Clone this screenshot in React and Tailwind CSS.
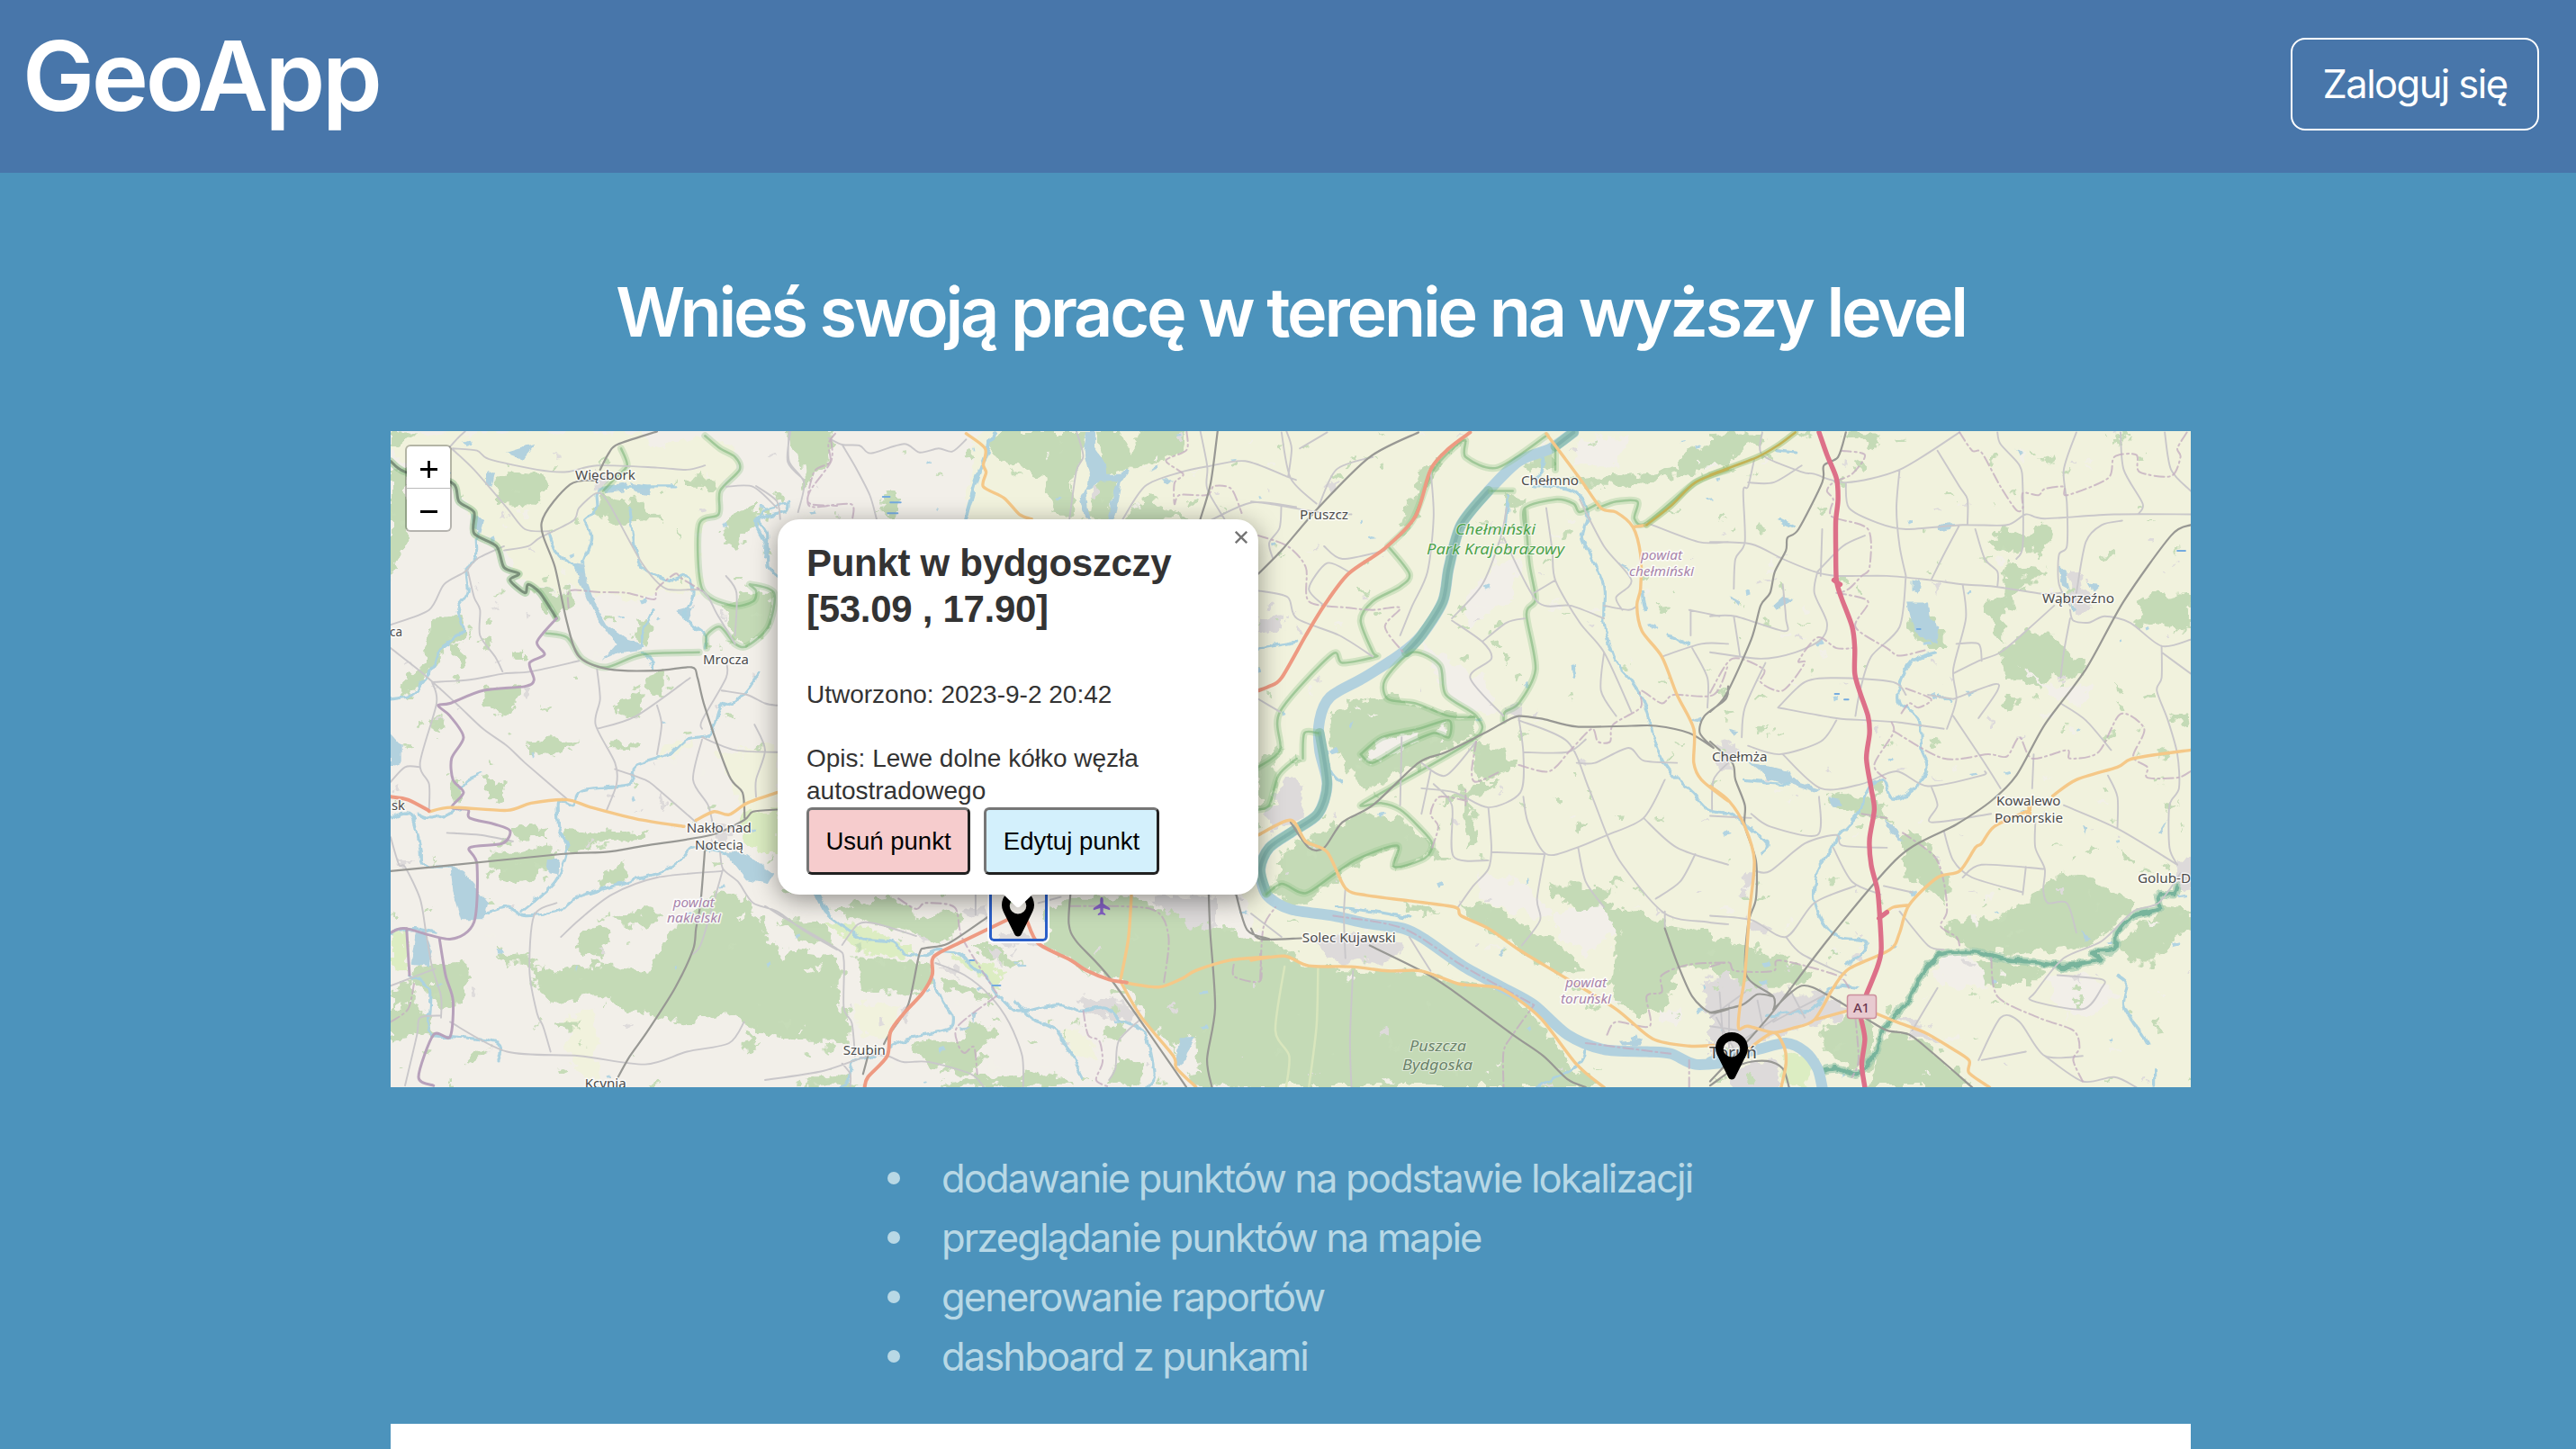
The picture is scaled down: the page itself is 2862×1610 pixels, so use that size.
import React from "react";

/* Map geometry, in overlapping sheets. Each sheet maps its own grid to canvas units. */
const SHEETS = [
  {
    at: [430, 470, 1 / 3, 0.47194],
    shapes: {
      E: "150,20 860,20 900,60 1040,30 1160,60 1180,110 1110,160 1100,220 1040,240 1050,400 900,400 850,420 620,395 530,390 450,370 380,300 290,240 280,200 220,140 60,100 12,60 12,20|600,1400 700,1380 700,1560 610,1500|1100,780 1300,750 1300,950 1190,930 1150,850|940,750 1040,745 960,780 900,790",
      F: "12,115 60,115 70,270 12,370|400,110 520,120 540,150 500,195 360,190 360,160|700,170 860,190 915,230 760,235 690,210|470,380 520,390 600,400 620,430 560,465 510,410|170,460 250,450 265,490 180,540 120,610 60,650 40,630 110,580|210,520 250,515 260,580 235,580|305,505 365,515 320,535|410,530 465,540 465,565 420,560|320,630 435,620 440,660 380,690 330,665|140,690 185,690 180,730 145,720|1150,220 1230,190 1230,240 1170,290 1120,270|990,130 1100,135 1095,155 990,150|1200,400 1290,400 1270,480 1200,530 1150,500 1120,430|1340,20 1480,20 1470,90 1400,140 1390,90 1340,60|870,600 910,590 915,650 880,640|750,670 850,625 840,690 770,690|740,755 835,755 830,768 745,765|460,745 560,740 640,750 540,790 470,775|320,830 390,850 395,890 340,880|420,960 540,950 540,975 430,980|590,950 700,960 880,965 850,985 720,990 640,1010 590,1000|340,1010 450,1010 550,990 555,1030 480,1070 400,1080 340,1050|690,1070 790,1040 800,1080 700,1090|100,1280 260,1270 270,1300 250,1370 180,1370 80,1310|12,1345 90,1310 80,1370 140,1400 150,1440 12,1455|360,1230 480,1270 560,1290 700,1270 870,1290 940,1200 1080,1110 1200,1115 1260,1200 1350,1280 1500,1290 1500,1430 1340,1450 1230,1430 1140,1390 1000,1410 880,1400 760,1370 690,1350 560,1370 500,1330 480,1280 400,1270|620,1220 700,1185 740,1200 720,1260 650,1250|750,1170 850,1145 920,1160 850,1190|560,1410 645,1410 640,1425 570,1425|280,1480 340,1465 300,1505 260,1500|1190,1430 1250,1460 1200,1480|12,20 100,20 60,50 12,60|820,480 880,460 880,520 830,520|210,850 240,830 260,870 230,900",
      G: "1190,920 1300,910 1300,1020 1220,1000 1170,960|12,1200 65,1190 70,1300 12,1280",
      U: "920,880 940,895 920,905 905,895|450,630 485,630 460,650|1080,940 1160,960 1140,990 1090,980|30,1030 90,1030 60,1050|690,110 740,130 700,165",
      W: "210,1040 260,1060 340,1130 325,1170 250,1170 220,1100|95,1200 130,1200 150,1240 140,1280 80,1275|1130,1010 1200,1015 1290,1060 1270,1085 1200,1075|620,330 655,335 665,370 690,420 740,480 800,510 850,520 840,535 780,540 720,560 765,520 710,470 665,415 645,375|810,140 880,150 870,170 830,165|540,1030 575,1030 565,1065 535,1060|280,210 320,230 310,260 285,250|970,440 1020,430 1000,470|12,730 50,760 50,800 12,810|395,70 490,50 450,85|330,110 360,120 350,150 330,145|720,150 800,140 790,160 730,165",
    },
    lines: {
      w: "300,260 300,320 265,340 270,400 235,440 255,490 180,530 140,590 80,640 12,650|540,260 570,310 650,350|660,230 680,270 650,330|810,200 840,330 940,370 1000,360 1020,400 995,460 1060,500 1060,530|1240,590 1170,650 1110,670 1080,730 1000,745 940,780 820,810 810,850 650,865 620,900 570,890 575,960 600,1000 560,1080 450,1150|12,930 80,920 110,1000 120,1040 210,1045|330,1155 400,1140 460,1160 570,1150 640,1115 900,1060 980,1030 1020,1000 1130,1010|1335,185 1325,210 1230,230 1265,290 1270,340 1300,360|12,1200 90,1190 160,1200|75,1300 140,1330 140,1400 150,1440 230,1445 370,1460 372,1500|100,920 150,930 260,905|850,540 885,560 890,580|960,150 720,155 700,200 660,230|1430,1110 1460,1150 1500,1175|850,520 860,480 885,440|245,860 270,840 315,825",
      K: "12,90 60,115 215,140 240,185 290,210 290,260 365,290 390,340 440,355 410,370 460,400 470,380 510,400 565,460",
      B: "565,460 500,515 525,545 475,565 490,605 460,620 320,630 210,660 170,665 210,690 255,740 215,790 220,840 255,870 215,905 270,910 275,930 360,945 410,960 385,990 275,1000 300,1040 290,1175 210,1215 60,1190 12,1200|175,1215 195,1300 220,1360 210,1445 155,1440 105,1540 155,1560|65,1190 75,1300",
      t: "900,20 770,50 740,70 710,110|700,135 610,145 515,235 560,340 600,470 640,550 740,580 900,583 1015,575 1035,600 1060,670 1140,830 1185,870 1192,930|12,1055 160,1045 580,1015 730,1010 860,995 1080,970 1190,935 1220,915 1300,910|1060,1000 1045,1130 1030,1190 1020,1240 960,1330 870,1430 810,1490 770,1540",
      P: "1060,30 1110,60 1160,80 1175,110 1110,160 1105,215 1040,240 1050,390 1150,430 1220,420 1230,395 1210,380 1290,400 1270,480 1200,525 1160,520 1110,480 1065,500 1065,530|530,495 600,505 650,555 730,575 850,545 1040,540|780,60 800,100 760,130 720,160",
      m: "220,60 300,65 340,85 500,110 600,115 700,100 900,105 1000,110 1060,100|215,60 290,110 400,200 460,250 540,255|390,300 470,290 510,270 620,230 640,200 700,165 740,190 850,330 930,390 1050,395 1100,450 1160,520|12,475 140,440 190,380 260,350 300,320 390,290|270,350 290,410 310,440 310,500 360,550 385,585|150,610 270,605 390,590 480,585 640,560|12,530 120,590 230,660 320,720 400,760 460,800 600,885|150,610 165,660 110,800 140,850 140,910|700,580 710,650 695,710 760,800 765,850 730,915|700,720 830,690 1010,600|900,665 915,710 900,780|760,815 860,840 900,860 1030,940|1130,560 1130,600 1050,700 1050,720|1115,630 1200,640 1260,660 1300,665|1050,745 1020,840 1070,900 1090,960|1110,1010 1120,1050 1170,1080 1220,1130 1300,1150 1400,1200 1500,1240|1120,1050 1050,1220 1020,1250|12,845 60,810 110,810|12,975 40,1040 60,1045 110,1120 130,1200 150,1280 180,1350 180,1400|200,965 310,970 420,985|565,1130 490,1160 475,1290 500,1390 520,1420 545,1480|1115,1055 900,1070 750,1110 640,1170 580,1210|1160,500 1165,400 1130,360|1340,20 1340,90 1390,140 1370,210|210,1410 400,1480 640,1490 860,1510 1000,1480 1140,1460 1190,1410|60,1560 100,1440 110,1400 180,1395|1050,740 1160,770 1300,775|1130,150 1220,150 1300,200|1225,710 1260,770 1230,840 1230,880|130,120 230,40 260,20|12,1325 160,1285",
      o: "140,915 215,905 400,912 480,895 600,887 680,905 830,932 990,950|1030,935 1090,915 1140,922 1200,895 1300,870",
      r: "12,880 70,887 140,913",
      b: "605,435 610,395 700,398 800,400 890,415 900,390 960,355 980,365 1050,395|1480,40 1480,90 1410,160 1410,190 1500,195|12,1410 70,1380 90,1320",
    },
  },
  {
    at: [840, 470, 0.38265, 1 / 3],
    shapes: {
      F: "90,27 230,27 205,70 215,130 170,160 140,230 135,180 130,130 120,100 160,80 100,45|700,27 960,27 950,120 920,180 910,320 880,320 850,240 830,180 750,140 680,100|985,27 1060,27 1080,90 1100,110 1110,27 1250,27 1240,100 1180,130 1060,160 1010,170|1000,190 1060,170 1020,320 960,320 965,260|1060,320 1110,270 1140,250 1200,290 1260,320|370,230 420,240 410,310 380,310|50,240 80,245 80,275 55,265|20,280 45,300 40,330 25,325",
      W: "960,27 985,27 985,80 1010,120 1020,170 1060,170 1075,150 1085,160 1060,200 1040,320 1020,320 1050,190 1000,195 960,220 970,320 955,320 940,250 970,180 950,90|1140,165 1170,135 1165,155|1180,190 1210,190 1195,205",
      U: "985,210 1000,215 985,260 970,250",
    },
    lines: {
      w: "695,27 670,100 640,200 610,320|0,320 30,285 90,270|0,320 30,370 25,450|690,27 668,100 636,200 606,320",
      o: "610,35 665,85 660,140 668,165 660,212 720,250 765,305 800,320",
      m: "100,27 92,130 140,190|210,50 250,72 300,75 320,95 340,100 430,70 475,98 530,85 570,95 610,55|250,72 290,150 330,240 350,320|0,210 60,260 70,320|930,27 950,110 930,160 910,320|1065,320 1130,210 1230,165 1310,145 1420,127 1540,178 1568,190|1290,27 1310,145 1310,220 1360,320|1310,330 1440,265 1568,280|1540,27 1555,85 1545,180|1525,280 1520,350 1490,400 1500,450",
      t: "1340,27 1320,200 1290,320",
      b: "230,35 210,70 215,130 170,160 150,250 165,280 275,270 280,320|1250,27 1250,90 1190,125 1240,170 1215,200 1215,270 1230,240 1310,240 1330,210 1380,220 1410,300",
      d: "368,246 388,246|390,265 420,265|382,301 411,301",
    },
  },
  {
    at: [850, 960, 0.35714, 1 / 3],
    shapes: {
      E: "290,460 420,480 380,590 290,560|920,550 1010,570 1040,660 960,650",
      F: "0,330 60,330 90,290 210,300 240,350 240,410 200,440 270,520 260,590 130,590 90,560 0,550|40,190 180,190 210,270 120,260|200,150 400,110 480,180 600,150 610,200 560,270 470,230 290,190|280,310 500,320 510,400 440,440 390,420 300,430 290,360|140,700 230,700 300,743 130,743|490,590 640,600 640,700 520,670 440,600|530,743 640,710 840,700 940,720 950,743|640,520 720,560 650,640 700,650 640,690 600,600|860,170 950,110 1130,110 1250,150 1568,280 1568,743 1400,743 1340,740 1250,600 1180,500 1100,380 1000,360 890,280|1060,540 1120,530 1110,590 1040,580|1100,640 1180,660 1150,743 1070,743|540,400 600,390 710,450 690,470 600,430|640,270 720,270 800,340 760,340 700,320|1250,110 1300,120 1340,250 1200,200",
      G: "170,190 290,200 410,260 480,300 380,310 300,290|570,300 700,330 740,370 730,410 660,370",
      U: "470,230 520,250 500,270|600,150 690,140 700,190 640,180|690,280 740,300 730,340|530,330 600,350 600,380|970,450 1060,440 1150,490 1140,530 1000,490|1190,110 1400,110 1400,200 1340,220|720,230 830,240 850,270 740,260|420,500 460,490 430,540",
      W: "640,500 660,495 650,530|595,545 640,540 610,560|1290,580 1340,580 1310,630 1300,670 1275,670",
      L: "1270,600 1340,570 1350,700 1290,690|1000,500 1060,500 1050,640 1010,560",
    },
    lines: {
      w: "165,100 200,170 260,220 310,250 400,260 430,300 500,305 540,290 610,300 640,340 690,380 720,430 780,490 850,480 920,470 980,490 1060,480 1110,520 1180,560 1210,700 1190,743|520,380 550,460 585,510 570,550 450,580 390,610|780,460 830,515 910,560 985,710|340,640 275,660 265,710 235,743",
      r: "755,185 620,255 540,297 520,320 520,370 490,430 430,500 390,560 380,640 320,710 310,743|815,190 850,265 950,320 1000,355 1070,385 1125,395",
      o: "1140,100 1130,250 1105,390|1125,397 1225,410 1300,380 1340,355 1450,320 1568,310|1105,390 1170,510 1270,640 1280,680 1340,743",
      t: "695,175 570,265 500,280 480,300 445,470 385,570 370,600|320,640 305,700|950,100 945,200 970,260 1080,390 1310,743|1380,100 1385,230 1400,480 1375,650 1390,743|1465,100 1500,220 1568,250",
      m: "0,140 60,180 220,280 245,320 245,480 270,530 280,640|240,270 290,200 350,200 470,240|0,720 180,690 320,640 380,640 430,660 510,660 640,700 680,743|530,330 620,370 700,440 760,530 800,640 803,743|655,100 655,170|850,130 920,110|1165,520 1100,590 1090,680 1070,720|240,665 265,700 265,743",
      b: "415,115 470,150 500,130 590,145 615,250 720,430|720,440 600,540 600,600 620,630 650,610 660,700|990,490 1005,570 1040,590 1050,660 1030,720 1070,743|950,140 1200,150 1255,240 1240,400|1540,300 1540,390 1460,375 1460,325",
      d: "637,321 650,321|707,405 732,405",
    },
  },
  {
    at: [1390, 470, 0.33801, 0.47194],
    shapes: {
      F: "250,690 330,660 440,640 560,670 700,690 735,700 730,740 640,770 540,810 440,840 360,870 340,830 290,790 260,740|740,750 820,770 870,800 800,840 740,845 725,800|610,890 720,850 810,850 720,890|700,890 745,920 740,990 710,1000|100,1010 220,960 380,920 480,930 540,960 600,1000 570,1030 470,1045 480,1000 380,1020 240,1090 180,1140 60,1110 90,1050|590,1000 660,1020 600,1030|0,1215 100,1230 170,1280 390,1290 550,1290 700,1320 830,1330 940,1400 1050,1510 1150,1564 0,1564|700,1140 790,1130 900,1180 1000,1220 1100,1290 1010,1300 860,1230 720,1165|960,1090 1100,1090 1200,1100 1150,1130 1300,1160 1360,1180 1568,1220 1568,1270 1400,1290 1360,1390 1250,1390 1180,1350 1200,1200 1040,1130|1010,140 1250,120 1400,110 1400,80 1568,30 1568,100 1460,120 1330,130 1200,150 1050,150|840,170 900,170 870,210 840,200|700,40 600,110 540,220 470,290 560,120|1080,940 1110,950 1090,965 1075,955|500,1130 600,1140 620,1155 520,1145|900,100 1000,60 1000,100 930,120|24,800 90,760 80,850 60,910 24,910|680,430 720,430 700,455|830,530 850,540 835,580",
      L: "360,780 430,750 530,725 560,740 430,790 380,800|600,725 650,710 640,740|1000,1150 1160,1140 1190,1200 1100,1250 1000,1200|720,480 860,420 880,330 800,330 700,430|560,520 640,640 740,680 820,690 760,600|1350,1380 1410,1385 1400,1420 1350,1410|740,1060 900,1080 1000,1170 900,1160 760,1120|1080,40 1250,30 1200,100 1060,100",
      U: "60,900 120,830 180,850 170,930 60,960|830,670 890,660 890,690 840,695|1480,1320 1568,1290 1568,1400 1500,1380|180,1220 330,1200 500,1240 440,1270 300,1270|420,1430 450,1420 460,1445 430,1450|240,150 280,150 260,180|24,460 100,450 110,490 24,490",
      W: "1440,700 1480,690 1480,705|1200,325 1240,340 1260,360|810,1250 840,1235 820,1255|1210,1455 1290,1450 1280,1465 1220,1465|320,715 340,700 330,720",
    },
    lines: {
      V: "1060,22 985,60 880,90 780,160 690,240 650,340 630,420 560,500 490,545 370,600 260,645 225,700 225,770 250,850 220,920 140,960 60,1000 30,1050 50,1110 130,1145 270,1160 380,1178 500,1190 570,1215 700,1280 830,1330 930,1370 1040,1440 1160,1475 1300,1480 1380,1485 1460,1510 1568,1505",
      Q: "1060,22 1000,55|780,160 690,240 650,340 630,420 560,500 510,540|225,730 250,850 220,920 140,960 60,1000 30,1050 50,1105",
      P: "50,1110 100,1085 160,1105 200,1100 340,1030 480,995 470,1045 570,1025 595,990 550,950 490,910 430,895 360,900 480,850 740,740 740,690 640,640 620,570 530,540 440,605 450,650 540,660 650,690 735,692|450,290 520,355 490,385 400,420 360,465 400,540 410,550 300,565 265,545 95,680 95,770 24,810|970,30 810,105 705,80 700,40 600,110 530,230 450,290|1000,60 1000,110|860,160 790,160|1140,200 1200,185 1270,185 1260,225 1300,235 1460,140 1568,110|900,250 900,200 1000,180 1060,190 1080,210 1140,190|900,200 915,330 935,415 905,450 935,580 880,660 835,680 830,700|170,790 175,730 220,730|360,780 430,740 550,720 650,700 650,740 600,730 500,760 400,800 360,780|24,910 60,900 90,830 150,790",
      r: "720,22 650,60 590,110 540,220 440,295 320,355 240,430 180,500 100,600 60,620 24,630",
      o: "970,25 1080,130 1150,200 1200,210 1255,245 1280,310 1280,390 1268,430 1285,490 1350,550 1400,640 1455,720 1455,800 1480,840 1568,890|1255,245 1300,240|24,970 130,935 180,985 250,1010 310,1095 380,1112 520,1125 670,1140 690,1160 780,1190 880,1240 1030,1305 1200,1380 1320,1450 1440,1467 1520,1465|0,1265 110,1255 190,1278 330,1280 450,1290 560,1290 680,1320 760,1325 830,1335 950,1400 1070,1510 1160,1564",
      y: "1300,240 1380,195 1460,140 1568,108",
      t: "550,22 390,80 220,200 100,300 24,355|130,940 190,1000 240,1000 300,940 400,900 550,800 640,775 780,725 830,705 880,690 960,697 1070,715 1250,713 1330,713 1440,730 1520,765|0,1190 30,1215 165,1213|390,1230 560,1290 650,1330 860,1440 960,1490 1040,1545 1100,1564|1360,1190 1400,1270 1450,1350 1510,1388 1568,1380|1568,620 1560,650 1490,690 1475,730 1520,765",
      w: "950,60 960,110 930,130|930,150 1040,155 1090,180 1105,220 1090,270 1130,330 1160,390 1160,470 1190,550 1230,590 1280,640 1320,730 1350,790 1390,830 1450,870 1500,910 1568,920|24,530 150,515|1370,500 1440,520|845,170 835,240|1060,570 1065,600|280,1140 400,1150 520,1165|1100,1470 1080,1510 940,1564|250,770 260,820 300,850|1285,400 1295,440",
      m: "0,185 60,190 220,210 330,215|100,22 130,130 215,190|220,200 280,110 400,80|160,60 250,22|24,395 120,410 150,460 290,500 400,550|440,300 300,320 240,290|240,430 190,390 250,330 320,350|590,110 600,220 580,350 530,430 490,500|660,460 760,380 820,270 840,200|660,465 760,515 790,555 720,600 830,690|760,515 840,470 900,460|830,270 940,420 1050,430 1160,460|970,200 990,300 1000,370 1080,470 1160,540 1250,680|1000,370 930,400|1160,540 1150,630 1200,690|1080,180 1160,290 1250,370 1200,410 1220,440|1270,430 1240,440 1160,430|1300,235 1470,280 1568,280|1350,550 1480,520 1568,520|1450,530 1500,600 1500,670|880,695 895,780 885,870 780,905 670,870 560,860|880,700 1040,750 1110,860 1170,970 1220,1040 1360,1155 1500,1175 1568,1180|895,775 1040,775 1100,745|1070,800 1130,800 1240,765 1290,795 1400,800|895,880 910,940 970,1015 1070,1000 1170,970 1290,930 1360,840|780,905 790,1000 780,1050 730,1090 680,1140|790,1010 960,1015|1075,1000 1100,1080 1160,1140|965,1015 940,1120 950,1170 890,1230|1290,930 1400,1000 1568,1040|1460,1015 1410,1080 1330,1120|495,740 490,900|590,820 560,920|600,850 660,900 665,1020 780,1030|310,1095 305,1160 310,1260|335,1290 325,1450 330,1564|520,1210 590,1290|24,650 95,680|1445,440 1445,500|1440,440 1540,455|1360,1150 1360,1190|0,1155 100,1210|560,800 640,830 740,750|1515,910 1520,840 1568,800",
      f: "110,1280 80,1430 125,1490 115,1564|220,1285 215,1420 190,1564",
      b: "24,265 120,290 180,340 190,420 320,435 400,440 490,435 440,480 500,540|740,750 725,820 740,845 820,820|880,805 980,820 1050,770 1120,720 1140,750 1180,750 1190,710 1280,670 1280,630 1350,660 1390,640 1520,640 1568,570|705,900 705,860|710,890 620,880 590,920 615,950 595,1000|930,1370 860,1440 830,1480 830,1564|1170,1440 1200,1410 1310,1420 1300,1350 1350,1340 1350,1300 1440,1275 1568,1270|1440,1564 1440,1500|30,1310 40,1190 80,1140|270,1160 500,1190 700,1280 930,1370|1100,1460 1380,1485",
    },
  },
  {
    at: [1900, 470, 0.35077, 0.47194],
    shapes: {
      F: "0,30 100,22 165,22 160,45 100,60 60,90 0,105|410,22 540,22 520,60 470,45|895,260 930,240 1000,265 1060,230 1085,270 1060,300 990,310 900,290|940,335 1060,345 1050,370 980,370 960,430 930,450 930,520 890,470 870,420 930,400|920,540 1000,490 1100,500 1130,540 1190,570 1170,600 1080,600 1040,630 980,600 930,600|1380,410 1420,395 1450,410 1522,400 1522,490 1460,480 1350,470 1360,430|930,640 980,650 960,680 920,670|370,880 430,870 520,890 550,920 600,950 560,935 400,905|610,965 640,960 700,1000 720,1040 760,1080 750,1130 700,1100 660,1080 610,1050|760,1170 900,1170 1000,1130 1080,1070 1180,1065 1340,1130 1320,1160 1200,1230 1100,1240 960,1250 820,1240 770,1210|1300,1240 1350,1180 1440,1130 1522,1140 1522,1190 1460,1220 1400,1270 1330,1270|0,1205 160,1240 330,1290 250,1330 150,1330 0,1290|360,1430 430,1390 510,1400 510,1510 440,1520 360,1470|530,1450 600,1430 700,1470 800,1540 830,1564 500,1564|800,1260 960,1270 1060,1290 1020,1320 900,1320 830,1310|1450,680 1520,690 1510,710 1460,700|640,470 690,455 740,490 740,530 690,530 640,500|520,850 550,840 545,870 520,880|1280,620 1310,630 1290,645|1440,890 1480,895 1450,910|1290,1005 1350,1030 1340,1045|1400,1410 1430,1400 1410,1430",
      L: "980,570 1060,620 1200,620 1180,660 1080,650|740,1250 830,1250 880,1330 760,1330 700,1290|1060,1300 1180,1300 1300,1340 1200,1400 1100,1380",
      G: "240,1480 340,1500 300,1564 230,1550",
      W: "625,425 690,425 695,455 725,480 720,520 660,500 640,470|640,370 665,375 660,400 640,395|720,240 770,235 760,250 725,255|200,430 230,410 270,415 210,440|1105,335 1125,350 1140,395 1115,385|1195,375 1230,380 1210,395|120,800 200,810 250,820 260,840 350,860 330,870 250,850 180,835|375,880 410,885 415,900 385,900|550,935 580,945 610,985 570,965|55,405 90,420 85,430|805,635 850,635 820,645|1175,1195 1210,1220 1185,1220|1180,945 1195,955 1190,970|1450,930 1430,970 1420,965|965,60 990,65 980,72|60,720 90,725 70,735|1140,420 1165,440 1150,445",
      U: "90,1110 110,1060 140,1060 120,1120 90,1115|0,1320 100,1310 200,1340 330,1340 440,1370 410,1400 250,1430 0,1500|60,1520 200,1500 230,1564 60,1564|590,1400 680,1420 740,1460 640,1440|1130,360 1180,360 1200,430 1150,450|1490,1030 1522,1020 1522,1110 1480,1080|120,1160 200,1200 130,1200|705,375 740,380 720,398|740,600 770,600 760,615|20,760 80,750 70,820 30,820",
      O: "985,908 1020,905 1015,920 990,920",
    },
    lines: {
      V: "0,1505 60,1490 150,1475 240,1460 300,1480 340,1520 355,1564",
      w: "715,540 640,560 600,620 600,660 660,695 670,770 690,810 660,850 600,885 570,880 550,840 490,870 480,910 410,970 380,1010 340,1050 330,1120 360,1180 410,1210 490,1220 480,1250 430,1275|0,915 60,920 120,950 180,990 160,1010|180,1395 320,1380 370,1340 400,1325 470,1330|1290,1300 1320,1320 1310,1370 1340,1410 1370,1440 1385,1460|110,840 250,850|730,640 760,660|1410,1560 1410,1520|220,230 265,245|210,65 270,70",
      X: "1480,1090 1470,1110 1420,1110 1420,1145 1340,1160 1290,1200 1280,1240 1210,1245 1240,1265 1200,1270 1120,1280 1040,1270 960,1265 900,1255 840,1245 780,1245 720,1255 660,1310 630,1360 590,1390 550,1430 530,1470 490,1520 460,1535 400,1520 345,1528",
      M: "345,22 370,75 400,130 405,180 398,230 398,300 400,370 415,410 450,480 458,530 458,590 475,635 500,690 505,730 495,790 510,860 520,910 505,980 510,1040 530,1100 537,1160 542,1240 530,1280 495,1345|477,1400 490,1450 480,1510 490,1564|535,1166 560,1152|392,370 412,380",
      o: "1522,770 1420,780 1330,792 1290,810 1160,840 1085,878|1000,915 900,950 860,990 840,1000 790,1055 720,1070 630,1135 600,1200 570,1240 440,1285 390,1330 330,1405 260,1425 200,1435 120,1420 90,1425 95,1370 110,1300 125,1150 140,1030 110,950 60,890 0,855|630,1135 580,1140 545,1158|330,1405 440,1383|525,1390 590,1410 680,1435 760,1470 820,1500 820,1530 885,1564|120,1475 200,1435 235,1470 240,1510 225,1564",
      y: "270,22 220,50 150,80 0,122",
      t: "430,22 405,80 360,100 355,140 280,250 245,270 240,300 205,350 190,400 160,430 130,510 50,640 0,680|1522,240 1460,265 1310,420 1190,580 1060,710 970,830 890,890 780,945 600,1020 380,1210 200,1385 100,1470 0,1550|0,750 70,800 80,840 110,900 110,950 145,1030 145,1120 120,1180 115,1300 200,1350 200,1385|200,1380 290,1325 380,1350 500,1405 560,1430 630,1440 700,1480 830,1564|0,1388 100,1370 150,1345 200,1350|0,1560 100,1510 180,1502 230,1520 250,1564",
      m: "165,22 165,75 290,115 330,120 430,140 600,110 790,22|120,140 200,140 290,100|140,85 120,150 105,160 110,280 80,320 75,390|0,280 130,285 230,320 330,350 400,360 560,360 700,370 800,380 900,385 1050,402 1110,400|430,140 440,200 530,235 620,250 800,240 940,240 1000,215 1060,225 1280,215 1522,215|600,110 590,200 600,290 620,360|720,65 790,150 815,180 815,240|790,240 740,310 700,370|840,250 870,320 910,350 910,385|910,22 920,50 980,100 990,150 990,290 970,320|1160,22 1120,110 1130,190 1130,290 1105,310 1105,380 1140,430|1440,22 1460,110 1522,160|1300,22 1310,110 1370,190 1355,215|0,455 80,455 235,490 240,460 230,380|340,350 330,400 370,470 350,510 270,540 160,555 0,540|75,455 95,550|175,565 110,670 100,740|215,670 300,610 400,600 580,610 620,640|215,670 400,695 500,700 600,705 740,720|770,690 860,790 920,860|620,360 600,480 510,550 475,630 460,690|800,380 810,460 770,580 780,650 750,720|1090,430 1000,490 920,540 850,560 770,590|780,520 850,520 860,560|1140,440 1150,465 1200,470 1250,455 1330,470 1430,525 1522,510|1430,525 1430,600 1415,630 1450,700 1480,780 1485,860 1455,900 1455,1000 1480,1040|1430,540 1522,590|120,760 220,780 350,750 400,700|230,780 350,860 480,850 590,820 690,855 860,830 870,820|345,880 340,970 190,950 130,920|0,925 130,930|1120,900 1290,955 1480,1040|1030,940 1030,1000 1060,1050 1055,1100 1070,1130 1130,1130 1160,1200|1060,1050 860,1040 800,1070|990,1110 1000,1045|740,960 770,1030 830,1070 990,1105|700,855 720,900 700,940 890,920|1110,660 1190,700 1270,770|1020,860 1025,780|1260,830 1290,880 1290,955|1490,1060 1420,1130 1340,1150 1240,1220 1120,1260 1030,1340 1020,1360 1180,1380 1240,1330 1240,1310 1100,1300|145,1055 190,1055 300,990 400,970 420,995 560,1000|0,1160 130,1170 240,1210 330,1130 460,1090|240,1210 290,1250 430,1300|390,1000 450,1080 540,1110|600,1150 690,1230 740,1240|550,1090 640,1105|850,1500 920,1400 980,1410 1060,1490 1180,1490|860,1500 1000,1480|1060,1490 1180,1550 1280,1540 1350,1564|640,1430 720,1330|110,1340 0,1400|0,1420 90,1430|20,1400 80,1480|150,1360 170,1430|60,1370 60,1480|250,1330 300,1400|200,1410 250,1390 380,1340|110,1450 210,1400|30,1340 40,1440|350,360 355,250|340,350 420,290 490,265|770,650 690,640|850,695 910,630 900,615 770,650|1160,400 1190,280 1240,240 1305,230|1110,600 1120,540 1140,460",
      b: "790,22 830,65 860,70 920,150 970,205 990,200 990,165 1040,170 1060,155 1120,150 1130,170 1260,130 1280,80 1350,75 1360,115 1460,125 1490,80 1480,60 1510,22|415,65 490,75 450,120 390,140 370,160 390,180 385,220 500,250 505,340 480,360 440,390 410,400|400,400 500,420 460,480 560,530 600,548 680,535|0,635 70,555 170,580 160,610 230,630 300,565 280,560 340,505 400,530 450,530|620,625 700,650 660,670 630,660 600,690|575,705 580,730 520,805 560,840|580,725 740,790 880,780 940,785 980,740 1020,790 1130,770 1140,790 1230,775 1300,685 1375,720 1340,785 1385,810 1385,835 1480,835 1522,820|610,965 710,1020 740,1080 750,1150 730,1185 780,1210 790,1230|480,920 560,930|890,1260 910,1350 1040,1400 1150,1430 1170,1470 1150,1500 1180,1550|0,1280 60,1270 80,1290 200,1290 220,1265 400,1300 440,1330|460,1400 470,1500 450,1540",
      d: "395,638 408,638|425,651 438,651|655,485 666,485|1480,301 1505,301",
    },
  },
];

const toPoints = (text, [x, y, sx, sy]) =>
  text.split(" ").map((pair) => {
    const [px, py] = pair.split(",").map(Number);
    return [x + px * sx, y + py * sy];
  });

const polygon = (pts) => "M" + pts.map((p) => p[0].toFixed(1) + " " + p[1].toFixed(1)).join("L") + "Z";

const curve = (pts) => {
  let d = `M${pts[0][0].toFixed(1)} ${pts[0][1].toFixed(1)}`;
  for (let i = 0; i < pts.length - 1; i++) {
    const a = pts[i - 1] || pts[i];
    const b = pts[i];
    const c = pts[i + 1];
    const e = pts[i + 2] || c;
    const k = 7;
    d += `C${(b[0] + (c[0] - a[0]) / k).toFixed(1)} ${(b[1] + (c[1] - a[1]) / k).toFixed(1)} ${(c[0] - (e[0] - b[0]) / k).toFixed(1)} ${(c[1] - (e[1] - b[1]) / k).toFixed(1)} ${c[0].toFixed(1)} ${c[1].toFixed(1)}`;
  }
  return d;
};

const collect = (group, kind, draw) =>
  SHEETS.map((s) => (s[group][kind] ? s[group][kind].split("|").map((t) => draw(toPoints(t, s.at))).join("") : "")).join("");

const AREA = (kind) => collect("shapes", kind, polygon);
const LINE = (kind) => collect("lines", kind, curve);

const specks = (count, seed, size) => {
  let s = seed;
  const rnd = () => (s = (s * 16807) % 2147483647) / 2147483647;
  let d = "";
  for (let i = 0; i < count; i++) {
    const x = 434 + rnd() * 2000;
    const y = 479 + rnd() * 728;
    const w = 2 + rnd() * size;
    const h = 1.5 + rnd() * size * 0.6;
    d += `M${x.toFixed(1)} ${y.toFixed(1)}l${w.toFixed(1)} ${(-h / 2).toFixed(1)}l${(w / 3).toFixed(1)} ${h.toFixed(1)}l${(-w).toFixed(1)} ${(h / 2).toFixed(1)}z`;
  }
  return d;
};

const LABELS = [
  ["Więcbork", 639, 533, 67],
  ["Mrocza", 781, 737.5, 51],
  ["ca", 433, 707, 14],
  ["sk", 435, 900, 15],
  ["Nakło nad", 762.7, 924.5, 72],
  ["Notecią", 772, 944, 54],
  ["Kcynia", 649.7, 1209, 46],
  ["Szubin", 936.8, 1171.7, 47],
  ["Pruszcz", 1444, 576.5, 54],
  ["Chełmno", 1690, 539, 64],
  ["Solec Kujawski", 1446.8, 1047, 104],
  ["Wąbrzeźno", 2269, 670, 80],
  ["Chełmża", 1902, 846, 61.5],
  ["Kowalewo", 2218, 895, 71.5],
  ["Pomorskie", 2216, 914, 76],
  ["Golub-D", 2375, 981, 59],
];
const COUNTIES = [
  ["powiat", 747.7, 1007.5, 46],
  ["nakielski", 741, 1025, 60],
  ["powiat", 1823, 622, 46],
  ["chełmiński", 1810, 640, 72],
  ["powiat", 1739, 1096.5, 46],
  ["toruński", 1734, 1115, 56],
];
const PARKS = [
  ["Chełmiński", 1617, 593.6, 89],
  ["Park Krajobrazowy", 1585, 615.5, 153],
];
const WOODS = [
  ["Puszcza", 1566, 1167.5, 63],
  ["Bydgoska", 1558, 1189, 78],
];

function Labels({ items, className }) {
  return (
    <g className={className}>
      {items.map(([text, x, y, w]) => (
        <text key={text + x} x={x} y={y} textLength={w} lengthAdjust="spacingAndGlyphs">
          {text}
        </text>
      ))}
    </g>
  );
}

function MapCanvas() {
  return (
    <svg className="block h-full w-full" viewBox="434 479 2000 728.5" preserveAspectRatio="none" fill="none" strokeLinejoin="round" strokeLinecap="round">
      <defs>
        <filter id="coast" x="0" y="0" width="1" height="1">
          <feTurbulence type="fractalNoise" baseFrequency="0.07" numOctaves="3" seed="4" />
          <feDisplacementMap in="SourceGraphic" scale="22" xChannelSelector="R" yChannelSelector="G" />
        </filter>
        <filter id="wobble" x="0" y="0" width="1" height="1">
          <feTurbulence type="fractalNoise" baseFrequency="0.08" numOctaves="2" seed="9" />
          <feDisplacementMap in="SourceGraphic" scale="8" xChannelSelector="R" yChannelSelector="G" />
        </filter>
      </defs>
      <rect x="434" y="479" width="2000" height="729" fill="#f2efe9" />
      <g filter="url(#coast)">
        <rect x="434" y="479" width="2000" height="729" fill="#f2efe9" />
        <path d="M1089 460L2460 460L2460 1230L1420 1230L1400 1050L1380 985L1300 990L1070 600Z" fill="#f1f2dd" />
        <path d={AREA("E")} fill="#f1f2dd" />
        <path d={AREA("G")} fill="#dcedc2" />
        <path d={AREA("F")} fill="#c4dab6" />
        <path d={AREA("L")} fill="#f2efe9" />
        <path d={AREA("U")} fill="#dddada" />
        <path d={specks(420, 77, 8)} fill="#c6dcb8" />
        <path d={specks(160, 4711, 9)} fill="#f2f0e8" />
        <path d={specks(160, 991, 6)} fill="#dedbdb" />
        <path d={AREA("O")} fill="#f6c886" />
      </g>
      <g filter="url(#wobble)">
        <path d={AREA("W")} fill="#b2d1de" />
        <path d={specks(110, 3131, 6)} fill="#b2d4e2" />
        <path d={LINE("w")} stroke="#acd2e0" strokeWidth="3.2" />
        <path d={LINE("X")} stroke="#9fcbae" strokeWidth="9" opacity=".7" />
        <path d={LINE("X")} stroke="#78b49c" strokeWidth="4.5" />
      </g>
      <path d={LINE("V")} stroke="#b2d1de" strokeWidth="12" />
      <path d={LINE("Q")} stroke="#94c2b8" strokeWidth="11" />
      <path d={LINE("Q")} stroke="#7aaca6" strokeWidth="4" opacity=".7" />
      <path d={LINE("P")} stroke="#8fc389" strokeWidth="8" opacity=".32" />
      <path d={LINE("P")} stroke="#6fae6e" strokeWidth="2.5" opacity=".5" />
      <path d={LINE("f")} stroke="#d9e6bd" strokeWidth="2.5" />
      <path d={LINE("m")} stroke="#c9c7ca" strokeWidth="1.9" />
      <path d={LINE("K")} stroke="#8cc08a" strokeWidth="8" opacity=".5" />
      <path d={LINE("K")} stroke="#6f8470" strokeWidth="3" opacity=".85" />
      <path d={LINE("B")} stroke="#b7a1bb" strokeWidth="3" />
      <path d={LINE("b")} stroke="#c4aec1" strokeWidth="2" strokeDasharray="11 4 2 4" opacity=".8" />
      <path d={LINE("t")} stroke="#989894" strokeWidth="2.2" />
      <path d={LINE("o")} stroke="#f5c888" strokeWidth="3.4" />
      <path d={LINE("y")} stroke="#9cc07a" strokeWidth="7" opacity=".5" />
      <path d={LINE("y")} stroke="#c2b254" strokeWidth="2.5" />
      <path d={LINE("r")} stroke="#ee9a82" strokeWidth="4" />
      <path d={LINE("M")} stroke="#dd7089" strokeWidth="5.4" />
      <path d={LINE("d")} stroke="#74abe0" strokeWidth="2" />
      <path
        d="M1224 997c1.3 0 1.7 1.5 1.7 3v4l7.500 5v2.200l-7.500-2.200v4.500l2.500 2v1.500l-4.200-1-4.200 1v-1.500l2.500-2v-4.500l-7.500 2.200v-2.200l7.500-5v-4c0-1.500.4-3 1.700-3z"
        fill="#8461c4"
      />
      <rect x="2052.500" y="1105.500" width="32" height="26" rx="3" fill="#e8cad0" stroke="#cc909d" strokeWidth="1.500" />
      <text x="2059" y="1124.500" textLength="18" className="fill-[#6d3850] font-['Noto_Sans',sans-serif] text-[15px] font-medium">
        A1
      </text>
      <Labels items={LABELS} className="fill-[#4c4c4c] stroke-white/70 stroke-[3px] font-['Noto_Sans',sans-serif] text-[15px] [paint-order:stroke]" />
      <Labels items={[["Toruń", 1899, 1175.5, 53]]} className="fill-[#4c4c4c] stroke-white/60 stroke-[3px] font-['Noto_Sans',sans-serif] text-[18.500px] [paint-order:stroke]" />
      <Labels items={COUNTIES} className="fill-[#a884ab] stroke-white/80 stroke-[3px] font-['Noto_Sans',sans-serif] text-[15px] italic [paint-order:stroke]" />
      <Labels items={PARKS} className="fill-[#4da34b] stroke-white/50 stroke-[2px] font-['Noto_Sans',sans-serif] text-[17px] italic [paint-order:stroke]" />
      <Labels items={WOODS} className="fill-[#6b836a] stroke-white/50 stroke-[2px] font-['Noto_Sans',sans-serif] text-[17px] italic [paint-order:stroke]" />
    </svg>
  );
}

function Pin({ className }) {
  return (
    <svg className={className} viewBox="0 0 36 53">
      <path fillRule="evenodd" d="M18 0C8 0 0 7.500 0 17.500c0 5 2.500 9 4.500 13L14.300 50.300c1.600 3 5.800 3 7.400 0L31.500 30.500c2-4 4.500-8 4.500-13C36 7.500 28 0 18 0zM18 9.500a9.300 9 0 1 1 0 18a9.300 9 0 1 1 0-18z" fill="#000" />
    </svg>
  );
}

function ZoomControl() {
  return (
    <div className="absolute left-4 top-[15px] flex h-[97px] w-[52px] flex-col overflow-hidden rounded-[6px] border-2 border-black/25 bg-white bg-clip-padding">
      <button className="flex h-[47px] items-center justify-center border-b border-[#bbb] pt-[5px]">
        <svg className="size-[19px]" viewBox="0 0 19 19" stroke="#000" strokeWidth="2.800">
          <path d="M0 9.500H19M9.500 0V19" />
        </svg>
      </button>
      <button className="flex flex-1 items-center justify-center pt-[5px]">
        <svg className="size-[19px]" viewBox="0 0 19 19" stroke="#000" strokeWidth="2.800">
          <path d="M0 9.500H19" />
        </svg>
      </button>
    </div>
  );
}

function Popup() {
  return (
    <div className="absolute left-[430px] top-[98px] h-[417px] w-[534px] rounded-[24px] bg-white px-8 pt-[23px] font-['Liberation_Sans',Arial,sans-serif] text-[#333] shadow-[0_6px_28px_rgba(0,0,0,0.4)]">
      <h2 className="text-[42px] font-bold leading-[51px] tracking-[-0.3px]">
        Punkt w bydgoszczy
        <br />
        [53.09 , 17.90]
      </h2>
      <p className="mt-[52px] text-[28px] leading-[36px]">Utworzono: 2023-9-2 20:42</p>
      <p className="mt-[35px] text-[28px] leading-[36px]">
        Opis: Lewe dolne kółko węzła
        <br />
        autostradowego
      </p>
      <div className="flex gap-[15px] text-[27.500px] text-black">
        <button className="h-[75px] w-[182px] whitespace-nowrap rounded-[6px] border-[3px] border-b-[#212121] border-l-[#767676] border-r-[#212121] border-t-[#767676] bg-[#f6cccd]">Usuń punkt</button>
        <button className="h-[75px] w-[195px] whitespace-nowrap rounded-[6px] border-[3px] border-b-[#212121] border-l-[#767676] border-r-[#212121] border-t-[#767676] bg-[#d3f0fc]">Edytuj punkt</button>
      </div>
      <svg className="absolute right-[12px] top-[13px] size-[14px]" viewBox="0 0 14 14" stroke="#757575" strokeWidth="2.400">
        <path d="M0.800 0.800L13.200 13.200M13.200 0.800L0.800 13.200" />
      </svg>
      <svg className="absolute left-[250px] top-[416px] h-[16px] w-[34px]" viewBox="0 0 34 16">
        <path d="M0 0H34L19 14.500Q17 16 15 14.500Z" fill="#fff" />
      </svg>
    </div>
  );
}

const FEATURES = ["dodawanie punktów na podstawie lokalizacji", "przeglądanie punktów na mapie", "generowanie raportów", "dashboard z punkami"];

export default function App() {
  return (
    <div className="flex h-[1610px] w-full flex-col overflow-hidden bg-[#4c93bc] font-['Inter',sans-serif] text-white">
      <header className="flex h-[192px] shrink-0 items-start justify-between bg-[#4876aa] pl-[25px] pr-[41px]">
        <h1 className="mt-[18px] text-[107px] font-[560] leading-[132px] tracking-[-3.300px]">GeoApp</h1>
        <button className="mt-[42px] h-[103px] w-[276px] rounded-[16px] border-2 border-white pt-px text-[43.500px] font-[430] tracking-[-1.600px]">Zaloguj się</button>
      </header>
      <main className="flex flex-1 flex-col items-center pl-[6px]">
        <h2 className="mt-[109px] whitespace-nowrap text-[75.500px] font-[560] leading-[92px] tracking-[-3.200px]">Wnieś swoją pracę w terenie na wyższy level</h2>
        <section className="relative mt-[86px] h-[728.500px] w-[2000px] shrink-0 overflow-hidden bg-[#f2efe9]">
          <MapCanvas />
          <div className="absolute left-[665px] top-[500px] h-[67px] w-[65px] rounded-[5px] border-[3px] border-[#2a5fc9] outline-2 outline-white" />
          <Pin className="absolute left-[679px] top-[509px] h-[53px] w-[36px]" />
          <Pin className="absolute left-[1472px] top-[668px] h-[53px] w-[36px]" />
          <Popup />
          <ZoomControl />
        </section>
        <ul className="mt-[68px] flex w-[896px] flex-col text-[43.500px] font-[430] leading-[66px] tracking-[-1.900px] text-[#b8d8e5]">
          {FEATURES.map((f) => (
            <li key={f} className="flex items-center gap-[46px] whitespace-nowrap">
              <span className="size-[14px] shrink-0 rounded-full bg-[#b8d8e5]" />
              {f}
            </li>
          ))}
        </ul>
        <section className="mt-auto h-[28px] w-[2000px] bg-white" />
      </main>
    </div>
  );
}
